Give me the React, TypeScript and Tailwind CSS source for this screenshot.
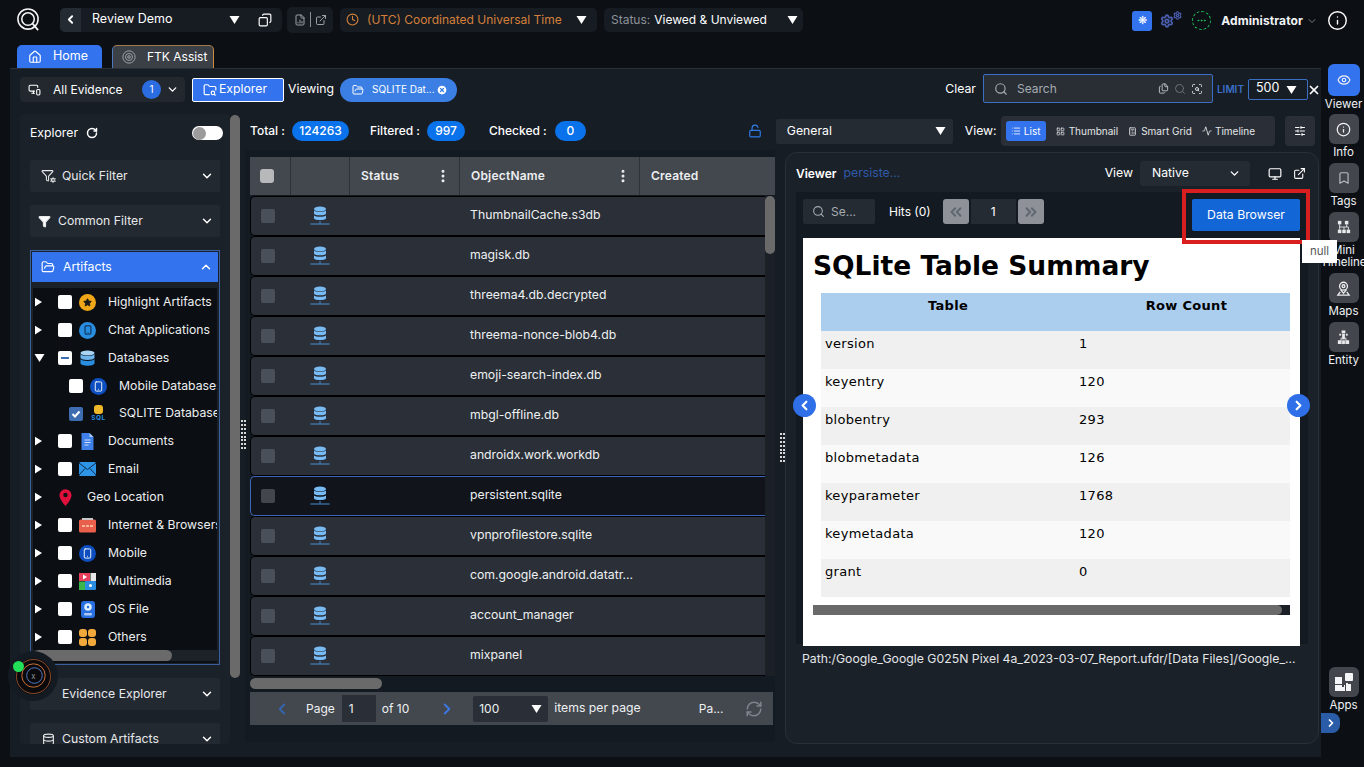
import React from 'react';
import { ChevronLeft, ChevronRight, ChevronDown, ChevronUp, Copy, Clock, Home, FolderSearch, FolderOpen, CircleX, Search, Eye, Info, Bookmark, Monitor, ExternalLink, LockOpen, List, LayoutGrid, Calculator, Activity, SlidersHorizontal, EllipsisVertical, RefreshCw, ChevronsLeft, ChevronsRight, Filter, RotateCw, X, Star, Smartphone, Database, FileChartColumn, Settings, Ellipsis, Files, ScanSearch, MonitorSmartphone } from 'lucide-react';

const Tri = ({ className = '' }: { className?: string }) => (
  <svg viewBox="0 0 10 8" className={`w-[11px] h-[8px] fill-white ${className}`}><path d="M0 0h10L5 8z" /></svg>
);

const DbIcon = () => (
  <svg viewBox="0 0 20 20" className="w-[20px] h-[20px]">
    <g fill="#78bcf6">
      <ellipse cx="10" cy="3" rx="6" ry="2.4" />
      <path d="M4 4.6c1.2 1.9 10.8 1.9 12 0v3.2c-1.2 2-10.8 2-12 0z" />
      <path d="M4 9.4c1.2 1.9 10.8 1.9 12 0v3.2c-1.2 2-10.8 2-12 0z" />
    </g>
    <path d="M10 15v2.5M0.5 18h19" stroke="#4a8fd0" strokeWidth="1" />
  </svg>
);

const TreeIcon = ({ k }: { k: string }) => {
  const cls = 'w-[17px] h-[17px] shrink-0';
  switch (k) {
    case 'star':
      return <span className={`${cls} rounded-full bg-[#f0a818] flex items-center justify-center`}><Star size={9} fill="#1a1a1a" stroke="#1a1a1a" /></span>;
    case 'chat':
      return <span className={`${cls} rounded-full bg-[#2a8ee0] flex items-center justify-center`}><Smartphone size={10} stroke="#0f3a66" strokeWidth={3} /></span>;
    case 'db':
      return (
        <svg viewBox="0 0 16 17" className={cls}>
          <ellipse cx="8" cy="3" rx="7" ry="2.6" fill="#a8d4f5" />
          <path d="M1 4c1 2.6 13 2.6 14 0v4c-1 2.6-13 2.6-14 0z" fill="#6cb4ec" />
          <path d="M1 9c1 2.6 13 2.6 14 0v4.5c-1 3-13 3-14 0z" fill="#2a8ee0" />
        </svg>
      );
    case 'mobile':
      return <span className={`${cls} rounded-full bg-[#0d4fc0] flex items-center justify-center`}><Smartphone size={11} stroke="#fff" strokeWidth={2} /></span>;
    case 'sql':
      return (
        <span className="w-[17px] h-[17px] shrink-0 flex flex-col items-center leading-none">
          <span className="w-[9px] h-[9px] bg-[#f0b92a] rounded-[3px]" />
          <span className="text-[6.5px] font-bold text-[#2a8ee0] tracking-[0.5px] mt-[1px]">SQL</span>
        </span>
      );
    case 'doc':
      return (
        <svg viewBox="0 0 16 17" className={cls}>
          <path d="M2 0h8l4 4v13H2z" fill="#3f7fe8" />
          <path d="M10 0l4 4h-4z" fill="#a9c8f5" />
          <path d="M5 7h6M5 9.5h6M5 12h4" stroke="#cfe0fa" strokeWidth="1" />
        </svg>
      );
    case 'mail':
      return (
        <svg viewBox="0 0 17 14" className="w-[17px] h-[14px] shrink-0">
          <rect width="17" height="14" rx="1.5" fill="#2e94e6" />
          <path d="M0 1l8.5 6.5L17 1M0 13l6-6.5M17 13l-6-6.5" stroke="#0b2c4d" strokeWidth="1" fill="none" />
        </svg>
      );
    case 'geo':
      return (
        <svg viewBox="0 0 14 18" className="w-[13px] h-[17px] shrink-0">
          <path d="M7 0a6.5 6.5 0 0 0-6.5 6.5C.5 11 7 18 7 18s6.5-7 6.5-11.5A6.5 6.5 0 0 0 7 0z" fill="#e0103c" />
          <circle cx="7" cy="6.2" r="2.4" fill="#111" />
        </svg>
      );
    case 'web':
      return (
        <svg viewBox="0 0 17 15" className="w-[17px] h-[15px] shrink-0">
          <rect y="1.5" width="17" height="13" rx="1.5" fill="#e8604c" />
          <rect x="3" width="11" height="2" fill="#c8c8c8" />
          <path d="M3 8h3M7 8h3M11 8h3" stroke="#f6d0b0" strokeWidth="1.5" />
        </svg>
      );
    case 'media':
      return (
        <svg viewBox="0 0 17 17" className={cls}>
          <rect width="11" height="8" fill="#e8405c" />
          <path d="M4 1.5l4 2.5-4 2.5z" fill="#fff" />
          <rect x="11.5" width="5.5" height="8" fill="#e8e8e8" />
          <rect y="8.5" width="8" height="8.5" fill="#39b54a" />
          <rect x="6" y="8" width="11" height="9" rx="1" fill="#2a8ee0" />
          <circle cx="11.5" cy="12.5" r="1.5" fill="#fff" />
        </svg>
      );
    case 'os':
      return (
        <svg viewBox="0 0 14 17" className="w-[14px] h-[17px] shrink-0">
          <rect width="14" height="17" rx="3" fill="#2a6fe0" />
          <circle cx="7" cy="6" r="3.8" fill="#d8ecfc" />
          <circle cx="7" cy="6" r="1.2" fill="#2a6fe0" />
          <rect x="3" y="12" width="8" height="2.5" rx="1" fill="#a9c8f5" />
        </svg>
      );
    default:
      return (
        <span className="w-[17px] h-[17px] shrink-0 grid grid-cols-2 gap-[1px]">
          <span className="bg-[#f2a93b] rounded-[3px]" /><span className="bg-[#f2a93b] rounded-[3px]" />
          <span className="bg-[#f2a93b] rounded-[3px]" /><span className="bg-[#f2a93b] rounded-[3px]" />
        </span>
      );
  }
};

const TreeRow = ({ label, icon, state = 'empty', open, child, noBox, short }: { label: string; icon: string; state?: string; open?: boolean; child?: boolean; noBox?: boolean; short?: boolean }) => (
  <div className={`${short ? 'h-[27px]' : 'h-[28px]'} flex items-center shrink-0 whitespace-nowrap ${child ? 'pl-[36px]' : 'pl-[1px]'}`}>
    {!child && (
      <span className="w-[24px] shrink-0">
        {open ? <Tri /> : <svg viewBox="0 0 8 10" className="w-[7px] h-[10px] fill-white ml-[1px]"><path d="M0 0l8 5-8 5z" /></svg>}
      </span>
    )}
    {noBox ? (
      <span className="w-[14px] shrink-0 flex justify-center"><TreeIcon k={icon} /></span>
    ) : (
      <>
        {state === 'checked' ? (
          <span className="w-[14px] h-[14px] shrink-0 rounded-[2px] bg-[#3d6cb0] flex items-center justify-center">
            <svg viewBox="0 0 10 10" className="w-[10px] h-[10px]"><path d="M1.5 5l2.5 2.5 4.5-5" stroke="#fff" strokeWidth="2" fill="none" /></svg>
          </span>
        ) : state === 'dash' ? (
          <span className="w-[14px] h-[14px] shrink-0 rounded-[2px] bg-white flex items-center justify-center"><span className="w-[8px] h-[2px] bg-[#3d6cb0]" /></span>
        ) : (
          <span className="w-[14px] h-[14px] shrink-0 rounded-[2px] bg-white" />
        )}
        <span className="w-[17px] flex justify-center ml-[7px] shrink-0"><TreeIcon k={icon} /></span>
      </>
    )}
    <span className={`text-[12.25px] text-[#eceef0] ${noBox ? 'ml-[15px]' : 'ml-[12px]'}`}>{label}</span>
  </div>
);

const Acc = ({ icon, label, pl = 'pl-[12px]' }: { icon: React.ReactNode; label: string; pl?: string }) => (
  <div className={`h-[32px] shrink-0 w-[190px] rounded-[2px] bg-[#232931] flex items-center ${pl} pr-[6px] text-[12.25px] text-[#e6e8ea]`}>
    {icon}
    <span className="ml-[7px] flex-1">{label}</span>
    <ChevronDown size={14} strokeWidth={2.5} className="text-white" />
  </div>
);

const rows = ['ThumbnailCache.s3db', 'magisk.db', 'threema4.db.decrypted', 'threema-nonce-blob4.db', 'emoji-search-index.db', 'mbgl-offline.db', 'androidx.work.workdb', 'persistent.sqlite', 'vpnprofilestore.sqlite', 'com.google.android.datatr...', 'account_manager', 'mixpanel'];
const tableRows: [string, string][] = [['version', '1'], ['keyentry', '120'], ['blobentry', '293'], ['blobmetadata', '126'], ['keyparameter', '1768'], ['keymetadata', '120'], ['grant', '0']];

const RailBtn = ({ icon, label, active, second }: { icon: React.ReactNode; label: string; active?: boolean; second?: string }) => (
  <div className={`flex flex-col items-center w-[43px] shrink-0 text-[11.5px] leading-[13px] text-[#f0f2f4] ${active ? '-mb-[1px]' : ''}`}>
    <div className={`rounded-[6px] flex items-center justify-center ${active ? 'bg-[#3373ee] w-[32px] h-[32px]' : 'bg-[#43474d] w-[30px] h-[30px]'}`}>{icon}</div>
    <span className="mt-[2px] whitespace-nowrap">{label}</span>
    {second && <span className="whitespace-nowrap -mt-[1px]">{second}</span>}
  </div>
);

const MiniIcon = () => (
  <svg viewBox="0 0 16 16" className="w-[14px] h-[14px]" fill="#e8eaec">
    <rect x="1" y="1" width="4" height="4" /><rect x="9" y="1" width="4" height="4" />
    <rect x="1" y="11" width="4" height="4" /><rect x="6" y="11" width="4" height="4" /><rect x="11" y="11" width="4" height="4" />
    <path d="M3 5v6M11 5v3H3M8 8v3M13 8v3M11 8h2" stroke="#e8eaec" fill="none" />
  </svg>
);
const MapIcon = () => (
  <svg viewBox="0 0 16 16" className="w-[15px] h-[15px]" fill="none" stroke="#eceef0" strokeWidth="1.4">
    <circle cx="8" cy="5.5" r="4.2" /><circle cx="8" cy="5.5" r="1.5" />
    <path d="M5 9.5L8 13l3-3.5M4.5 11.5L2 15h12l-2.5-3.5" />
  </svg>
);
const EntityIcon = () => (
  <svg viewBox="0 0 16 16" className="w-[15px] h-[15px]" fill="#e8eaec">
    <rect x="6" y="0.5" width="4" height="3" /><rect x="3.5" y="4" width="2" height="2" /><rect x="10.5" y="4" width="2" height="2" />
    <rect x="6.5" y="4" width="3" height="6" /><path d="M2 15v-4h3V8h1v7zM14 15v-4h-3V8h-1v7z" /><rect x="6.5" y="11" width="3" height="4" />
  </svg>
);
const AppsIcon = () => (
  <svg viewBox="0 0 20 20" className="w-[20px] h-[20px]" fill="#f4f5f6">
    <rect x="1" y="5" width="7" height="7" /><rect x="11" y="1" width="8" height="8" rx="1" />
    <path d="M1 13h7v2h2v-2h1v6H1zM12 11h2v1h3v7h-5z" />
  </svg>
);
const QuickIcon = () => (
  <span className="relative w-[14px] h-[14px] flex">
    <Filter size={13} />
    <Settings size={8} fill="#fff" stroke="#232931" className="absolute right-[-2px] bottom-[-1px]" />
  </span>
);

export default function App() {
  return (
    <div className="w-[1364px] h-[767px] overflow-hidden bg-[#0c1015] flex flex-col relative font-[Inter,'Noto_Sans',sans-serif] text-white">
      {/* top bar */}
      <div className="h-[45px] shrink-0 flex items-center text-[12.5px]">
        <svg viewBox="0 0 26 26" className="w-[25px] h-[25px] ml-[16px] mb-[6px]">
          <circle cx="12.5" cy="12.5" r="10.5" stroke="#f2f4f6" strokeWidth="1.6" fill="none" />
          <circle cx="12.5" cy="12.5" r="6.5" stroke="#f2f4f6" strokeWidth="1.6" fill="none" />
          <path d="M17 17l6 7" stroke="#f2f4f6" strokeWidth="1.8" />
        </svg>
        <div className="ml-[19px] mb-[6px] w-[222px] h-[24px] rounded-[5px] bg-[#171c23] flex items-center overflow-hidden">
          <span className="w-[21px] h-full bg-[#252b33] flex items-center justify-center"><ChevronLeft size={13} strokeWidth={3.5} /></span>
          <span className="ml-[11px] flex-1">Review Demo</span>
          <Tri className="mr-[18px]" />
          <Copy size={14} className="mr-[10px] scale-x-[-1]" />
        </div>
        <div className="ml-[5px] mb-[6px] w-[46px] h-[26px] rounded-[5px] bg-[#171c23] flex items-center justify-center gap-[4px] text-[#9ca1a7]">
          <FileChartColumn size={12} />
          <span className="w-px h-[15px] bg-[#8a8f95]" />
          <ExternalLink size={12} />
        </div>
        <div className="ml-[7px] mb-[6px] w-[257px] h-[24px] rounded-[5px] bg-[#171c23] flex items-center pl-[6px] text-[12px] text-[#d5803a]">
          <Clock size={13} strokeWidth={2} />
          <span className="ml-[8px] flex-1 whitespace-nowrap">(UTC) Coordinated Universal Time</span>
          <Tri className="mr-[10px]" />
        </div>
        <div className="ml-[7px] mb-[6px] w-[199px] h-[24px] rounded-[5px] bg-[#171c23] flex items-center pl-[7px] text-[12px]">
          <span className="text-[#8d9298]">Status:</span>
          <span className="ml-[4px] flex-1 whitespace-nowrap">Viewed & Unviewed</span>
          <Tri className="mr-[5px]" />
        </div>
        <div className="ml-auto flex items-center mb-[4px]">
          <span className="w-[20px] h-[20px] rounded-[3px] bg-[#3373ee] flex items-center justify-center text-[11px]">❋</span>
          <Settings size={14} strokeWidth={3} className="ml-[8px] text-[#4c5fb0]" />
          <Settings size={9} strokeWidth={3} className="-mt-[10px] -ml-[1px] text-[#4c5fb0]" />
          <span className="ml-[10px] w-[19px] h-[19px] rounded-full border border-dashed border-[#22c55e] flex items-center justify-center"><Ellipsis size={11} className="text-[#22c55e]" /></span>
          <span className="ml-[10px] text-[12px] font-bold text-[#f2f4f6] tracking-[0.1px]">Administrator</span>
          <ChevronDown size={12} className="ml-[3px] text-[#777c82]" />
          <Info size={21} strokeWidth={1.6} className="ml-[9px] mr-[16px] text-white" />
        </div>
      </div>

      <div className="flex-1 flex min-h-0">
        <div className="w-[1321px] shrink-0 flex flex-col">
          {/* tabs */}
          <div className="h-[23px] shrink-0 flex pl-[17px] gap-[10px] text-[12.5px]">
            <div className="w-[85px] rounded-t-[5px] bg-[#3373ee] flex items-center pl-[11px]">
              <Home size={14} />
              <span className="ml-[11px]">Home</span>
            </div>
            <div className="w-[102px] rounded-t-[5px] bg-[#3b4047] border border-b-0 border-l-[#4f78bd] border-t-[#a07c4a] border-r-[#d08a3c] flex items-center pl-[9px] text-[12px]">
              <svg viewBox="0 0 16 16" className="w-[14px] h-[14px]" fill="none" stroke="#a9adb2"><circle cx="8" cy="8" r="7" /><circle cx="8" cy="8" r="4" /><circle cx="8" cy="8" r="1.5" /></svg>
              <span className="ml-[11px]">FTK Assist</span>
            </div>
          </div>

          {/* main panel */}
          <div className="ml-[10px] w-[1311px] h-[689px] bg-[#171d25] border-t border-[#2b3037] flex flex-col">
            {/* filter bar */}
            <div className="h-[39px] shrink-0 flex items-center pl-[10px] pt-[2px] text-[12.25px]">
              <div className="w-[165px] h-[25px] rounded-[4px] bg-[#23282f] flex items-center pl-[8px] text-[12px]">
                <MonitorSmartphone size={13} />
                <span className="ml-[12px] flex-1">All Evidence</span>
                <span className="w-[19px] h-[19px] rounded-full bg-[#2b6ce0] flex items-center justify-center text-[10px]">1</span>
                <ChevronDown size={13} strokeWidth={2.5} className="ml-[5px] mr-[6px]" />
              </div>
              <div className="ml-[7px] w-[92px] h-[24px] rounded-[2px] bg-[#3373ee] border border-white flex items-center pl-[10px]">
                <FolderSearch size={14} />
                <span className="ml-[2px]">Explorer</span>
              </div>
              <span className="ml-[4px]">Viewing</span>
              <div className="ml-[6px] w-[117px] h-[24px] rounded-full bg-[#3b7fe4] flex items-center pl-[12px] text-[10px]">
                <FolderOpen size={12} />
                <span className="ml-[8px] flex-1">SQLITE Dat...</span>
                <CircleX size={12} fill="#fff" stroke="#3b7fe4" strokeWidth={2.5} className="mr-[9px]" />
              </div>
              <span className="ml-auto">Clear</span>
              <div className="ml-[7px] w-[230px] h-[29px] -mt-[2px] rounded-[2px] bg-[#292e35] border border-[#3a6fc4] flex items-center pl-[10px]">
                <Search size={14} className="text-[#a6abb1]" />
                <span className="ml-[9px] flex-1 text-[#a6abb1] text-[12px]">Search</span>
                <Files size={11} className="text-[#c3c7cb]" />
                <Search size={12} className="ml-[5px] text-[#6c7177]" />
                <ScanSearch size={12} className="ml-[5px] mr-[9px] text-[#d5d8db]" />
              </div>
              <span className="ml-[4px] text-[10px] font-semibold text-[#3b70c9]">LIMIT</span>
              <div className="ml-[4px] w-[60px] h-[21px] rounded-[2px] border border-[#3a6fc4] flex items-center pl-[7px] text-[12.5px]">
                <span className="flex-1 -mt-[2px]">500</span>
                <Tri className="w-[6px] h-[4px] fill-[#3b82f6] mr-[10px]" />
              </div>
              <X size={14} strokeWidth={3} className="ml-[-1px]" />
            </div>

            {/* content */}
            <div className="flex-1 flex pl-[10px] min-h-0">
              <div className="w-[210px] h-[630px] mt-[6px] bg-[#1b2129] rounded-[4px] flex flex-col pl-[10px] overflow-hidden text-[12.25px] shrink-0">
                <div className="h-[46px] pb-[8px] shrink-0 flex items-center">
                  <span>Explorer</span>
                  <RotateCw size={12} strokeWidth={3} className="ml-[8px]" />
                  <span className="ml-auto mr-[7px] w-[31px] h-[14px] rounded-full bg-white flex items-center pl-[1px]"><span className="w-[13px] h-[13px] rounded-full bg-[#9c9c9c]" /></span>
                </div>
                <Acc icon={<QuickIcon />} label="Quick Filter" pl="pl-[11px]" />
                <div className="h-[13px] shrink-0" />
                <Acc icon={<Filter size={13} fill="#fff" />} label="Common Filter" pl="pl-[8px]" />
                <div className="h-[13px] shrink-0" />
                <div className="w-[190px] h-[415px] shrink-0 border border-[#3a5f9c] p-[1px] flex flex-col">
                  <div className="h-[30px] shrink-0 bg-[#3373ee] flex items-center pl-[9px] pr-[5px]">
                    <FolderOpen size={14} />
                    <span className="ml-[8px] flex-1">Artifacts</span>
                    <ChevronUp size={14} strokeWidth={2.5} />
                  </div>
                  <div className="mt-[6px] mx-[1px] flex-1 bg-[#0b0e13] flex flex-col overflow-hidden">
                    <TreeRow label="Highlight Artifacts" icon="star" />
                    <TreeRow label="Chat Applications" icon="chat" />
                    <TreeRow label="Databases" icon="db" open state="dash" />
                    <TreeRow label="Mobile Databases" icon="mobile" child />
                    <TreeRow label="SQLITE Database" icon="sql" child state="checked" short />
                    <TreeRow label="Documents" icon="doc" />
                    <TreeRow label="Email" icon="mail" />
                    <TreeRow label="Geo Location" icon="geo" noBox />
                    <TreeRow label="Internet & Browsers" icon="web" />
                    <TreeRow label="Mobile" icon="mobile" />
                    <TreeRow label="Multimedia" icon="media" />
                    <TreeRow label="OS File" icon="os" />
                    <TreeRow label="Others" icon="others" />
                    <div className="h-[11px] mt-[-1px] shrink-0 bg-[#1d2229]"><div className="w-[139px] h-full rounded-full bg-[#6a6a6a]" /></div>
                  </div>
                </div>
                <div className="h-[13px] shrink-0" />
                <Acc icon={<span className="w-[14px]" />} label="Evidence Explorer" pl="pl-[11px]" />
                <div className="h-[13px] shrink-0" />
                <Acc icon={<Database size={13} />} label="Custom Artifacts" pl="pl-[12px]" />
              </div>
              <div className="w-[10px] h-[563px] mt-[7px] shrink-0 rounded-full bg-[#6a6a6a]" />
              <div className="w-[5px] shrink-0" />

              {/* right area */}
              <div className="w-[1075px] flex flex-col shrink-0">
                <div className="h-[44px] pt-[2px] shrink-0 flex items-center text-[12px] font-medium pl-[5px]">
                  <span>Total :</span>
                  <span className="ml-[7px] w-[57px] h-[20px] rounded-full bg-[#0a72ea] flex items-center justify-center">124263</span>
                  <span className="ml-[21px]">Filtered :</span>
                  <span className="ml-[7px] w-[38px] h-[20px] rounded-full bg-[#0a72ea] flex items-center justify-center">997</span>
                  <span className="ml-[24px]">Checked :</span>
                  <span className="ml-[8px] w-[31px] h-[20px] rounded-full bg-[#0a72ea] flex items-center justify-center">0</span>
                  <LockOpen size={14} className="ml-[162px] text-[#2f7be8]" />
                  <div className="ml-[14px] w-[177px] h-[25px] rounded-[2px] bg-[#252b33] flex items-center pl-[11px] font-normal text-[12.25px]">
                    <span className="flex-1">General</span>
                    <Tri className="mr-[7px]" />
                  </div>
                  <span className="ml-[12px] font-normal text-[12.25px]">View:</span>
                  <div className="ml-[4px] w-[274px] h-[30px] rounded-[4px] bg-[#2a2f37] flex items-center pl-[5px] text-[10px] font-normal text-[#e4e6e8]">
                    <span className="w-[40px] h-[20px] rounded-[3px] bg-[#3373ee] text-white flex items-center justify-center gap-[3px]"><List size={10} />List</span>
                    <span className="ml-[10px] flex items-center gap-[4px]"><LayoutGrid size={9} />Thumbnail</span>
                    <span className="ml-[10px] flex items-center gap-[4px]"><Calculator size={9} />Smart Grid</span>
                    <span className="ml-[10px] flex items-center gap-[3px]"><Activity size={10} />Timeline</span>
                  </div>
                  <div className="ml-[10px] w-[30px] h-[30px] rounded-[4px] bg-[#2a2f37] flex items-center justify-center"><SlidersHorizontal size={12} /></div>
                </div>

                <div className="flex-1 flex min-h-0">
                  {/* grid panel */}
                  <div className="w-[530px] h-[592px] -mt-[2px] shrink-0 bg-[#141a21] pt-[7px] pl-[5px] flex flex-col">
                    <div className="h-[38px] shrink-0 w-[525px] bg-[#43484e] flex items-stretch text-[12px] font-semibold tracking-[0.2px] text-[#eceef0]">
                      <div className="w-[41px] border-r border-[#2e3238] flex items-center pl-[10px]"><span className="w-[14px] h-[14px] rounded-[3px] bg-[#b6b8ba]" /></div>
                      <div className="w-[59px] border-r border-[#2e3238]" />
                      <div className="w-[110px] border-r border-[#2e3238] flex items-center pl-[11px]"><span className="flex-1">Status</span><EllipsisVertical size={16} strokeWidth={2.5} className="mr-[8px]" /></div>
                      <div className="w-[180px] border-r border-[#2e3238] flex items-center pl-[11px]"><span className="flex-1">ObjectName</span><EllipsisVertical size={16} strokeWidth={2.5} className="mr-[8px]" /></div>
                      <div className="flex items-center pl-[11px]">Created</div>
                    </div>
                    <div className="flex w-[525px] h-[480px] shrink-0 mt-[1px]">
                      <div className="w-[515px] flex flex-col">
                        {rows.map((r, i) => (
                          <div key={r} className={`h-[40px] shrink-0 rounded-l-[5px] border border-r-0 flex items-center ${i === 7 ? 'bg-[#11151b] border-[#3d66b8] border-r' : 'bg-[#2b3038] border-black'}`}>
                            <span className={`ml-[10px] w-[14px] h-[14px] rounded-[2px] ${i === 7 ? 'bg-[#43474d]' : 'bg-[#4a5059]'}`} />
                            <span className="ml-[35px]"><DbIcon /></span>
                            <span className="ml-[140px] -mt-[1px] text-[12.25px] text-[#eef0f2] whitespace-nowrap">{r}</span>
                          </div>
                        ))}
                      </div>
                      <div className="w-[10px] bg-[#1b2027]"><div className="h-[58px] rounded-full bg-[#6a6a6a]" /></div>
                    </div>
                    <div className="h-[11px] shrink-0 w-[525px] mt-[2px]"><div className="w-[132px] h-full rounded-full bg-[#6a6a6a]" /></div>
                    <div className="h-[33px] shrink-0 w-[523px] mt-[3px] bg-[#43484e] flex items-center text-[12px] text-[#eef0f2]">
                      <ChevronLeft size={18} strokeWidth={2.5} className="ml-[23px] text-[#3565b0]" />
                      <span className="ml-[15px]">Page</span>
                      <span className="ml-[7px] w-[34px] h-[27px] bg-[#2a2f37] flex items-center pl-[7px]">1</span>
                      <span className="ml-[6px]">of 10</span>
                      <ChevronRight size={18} strokeWidth={2.5} className="ml-[29px] text-[#3b78e0]" />
                      <div className="ml-[17px] w-[75px] h-[26px] rounded-[2px] bg-[#2a2f37] flex items-center pl-[6px]">
                        <span className="flex-1">100</span>
                        <Tri className="mr-[6px]" />
                      </div>
                      <span className="ml-[6px] text-[12.25px]">items per page</span>
                      <span className="ml-[58px]">Pa...</span>
                      <RefreshCw size={18} className="ml-[21px] text-[#7e848b]" />
                    </div>
                  </div>
                  <div className="w-[10px] shrink-0" />

                  {/* viewer */}
                  <div className="w-[534px] h-[592px] shrink-0 rounded-[12px] bg-[#1b2129] border border-[#2a3039] flex flex-col relative">
                    <div className="h-[39px] pt-[2px] shrink-0 flex items-center pl-[10px] text-[12.25px]">
                      <span className="font-semibold text-[12px]">Viewer</span>
                      <span className="ml-[7px] text-[#2f5aa8]">persiste...</span>
                      <span className="ml-auto">View</span>
                      <div className="ml-[7px] w-[110px] h-[25px] rounded-[3px] bg-[#252b33] flex items-center pl-[12px]">
                        <span className="flex-1">Native</span>
                        <ChevronDown size={13} strokeWidth={2.5} className="mr-[9px]" />
                      </div>
                      <Monitor size={14} className="ml-[18px]" />
                      <ExternalLink size={13} className="ml-[11px] mr-[12px]" />
                    </div>
                    <div className="ml-[10px] w-[512px] h-[452px] shrink-0 bg-[#141a21] flex flex-col pl-[7px]">
                      <div className="h-[46px] shrink-0 flex items-start pt-[7px] text-[12px]">
                        <div className="w-[72px] h-[25px] rounded-[2px] bg-[#252b33] flex items-center pl-[9px] text-[#a6abb1]"><Search size={13} /><span className="ml-[6px]">Se...</span></div>
                        <span className="ml-[14px] h-[25px] flex items-center">Hits (0)</span>
                        <span className="ml-[12px] w-[26px] h-[25px] rounded-[3px] bg-[#8e9298] flex items-center justify-center text-[#5f6670]"><ChevronsLeft size={18} strokeWidth={2.5} /></span>
                        <span className="ml-[2px] w-[45px] h-[25px] bg-[#252b33] flex items-center justify-center">1</span>
                        <span className="ml-[2px] w-[26px] h-[25px] rounded-[3px] bg-[#8e9298] flex items-center justify-center text-[#5f6670]"><ChevronsRight size={18} strokeWidth={2.5} /></span>
                        <button className="ml-auto mr-[8px] w-[108px] h-[32px] rounded-[2px] bg-[#1366d6] text-[12.25px] text-white">Data Browser</button>
                      </div>
                      <div className="w-[497px] h-[408px] shrink-0 bg-white pl-[10px] pt-[10px] font-['DejaVu_Sans',sans-serif] text-black flex flex-col">
                        <h1 className="text-[26.5px] font-bold leading-[36px] h-[45px]">SQLite Table Summary</h1>
                        <div className="ml-[8px] w-[469px] text-[13px] tracking-[0.3px]">
                          <div className="h-[38px] bg-[#abcdee] flex font-bold">
                            <span className="w-[254px] text-center pt-[3px]">Table</span>
                            <span className="flex-1 text-center pt-[3px] pl-[8px]">Row Count</span>
                          </div>
                          {tableRows.map(([a, b], i) => (
                            <div key={a} className={`h-[38px] flex pl-[4px] pt-[3px] ${i % 2 === 0 ? 'bg-[#f0f0f0]' : 'bg-[#f9f9f9]'}`}>
                              <span className="w-[254px]">{a}</span>
                              <span>{b}</span>
                            </div>
                          ))}
                        </div>
                        <div className="w-[477px] h-[10px] mt-[8px] bg-[#1b2027]"><div className="w-[469px] h-full rounded-r-full bg-[#6a6a6a]" /></div>
                      </div>
                    </div>
                    <div className="ml-[16px] mt-[6px] text-[12.25px] text-[#e4e6e8] whitespace-nowrap">Path:/Google_Google G025N Pixel 4a_2023-03-07_Report.ufdr/[Data Files]/Google_...</div>

                    {/* overlays */}
                    <div className="absolute left-[396px] top-[36px] w-[128px] h-[55px] border-[4px] border-[#d81e1e] pointer-events-none" />
                    <span className="absolute left-[7px] top-[241px] w-[23px] h-[23px] rounded-full bg-[#2f6fe8] flex items-center justify-center"><ChevronLeft size={15} strokeWidth={3.5} /></span>
                    <span className="absolute left-[501px] top-[241px] w-[23px] h-[23px] rounded-full bg-[#2f6fe8] flex items-center justify-center"><ChevronRight size={15} strokeWidth={3.5} /></span>
                  </div>
                </div>
              </div>
            </div>
          </div>
        </div>

        {/* right rail */}
        <div className="w-[43px] shrink-0 flex flex-col pt-[19px]">
          <div className="flex flex-col gap-[4px] translate-x-[1px]">
            <RailBtn active icon={<Eye size={14} />} label="Viewer" />
            <RailBtn icon={<Info size={15} />} label="Info" />
            <RailBtn icon={<Bookmark size={14} className="text-[#b9bcc0]" />} label="Tags" />
            <RailBtn icon={<MiniIcon />} label="Mini" second="Timeline" />
            <RailBtn icon={<MapIcon />} label="Maps" />
            <RailBtn icon={<EntityIcon />} label="Entity" />
          </div>
          <div className="mt-[300px] translate-x-[1px]"><RailBtn icon={<AppsIcon />} label="Apps" /></div>
          <span className="w-[19px] h-[20px] rounded-r-[8px] bg-[#2a5ca8] flex items-center justify-center mt-[1px]"><ChevronRight size={12} strokeWidth={3.5} /></span>
        </div>
      </div>

      {/* floating overlays */}
      <span className="absolute left-[1302px] top-[240px] w-[35px] h-[23px] bg-white text-[#555] text-[11.5px] flex items-center justify-center">null</span>
      <div className="absolute left-[8px] top-[651px] w-[50px] h-[50px] rounded-full bg-[#141a21] flex items-center justify-center">
        <svg viewBox="0 0 38 38" className="w-[37px] h-[37px]">
          <circle cx="19" cy="19" r="18.5" fill="#0a0a0c" />
          <circle cx="19" cy="19" r="17.5" fill="none" stroke="#c96a3a" strokeWidth="0.7" />
          <circle cx="19" cy="18" r="12" fill="none" stroke="#d0703a" strokeWidth="1" />
          <circle cx="20" cy="18" r="8" fill="none" stroke="#5478c8" strokeWidth="1" />
          <text x="19" y="21.5" textAnchor="middle" fontSize="8" fill="#8a8f95">x</text>
        </svg>
      </div>
      <span className="absolute left-[13px] top-[661px] w-[11px] h-[11px] rounded-full bg-[#22e05a]" />
      <div className="absolute left-[241px] top-[420px] w-[5px] h-[30px] grid grid-cols-2 gap-[1px]">
        {Array.from({ length: 16 }).map((_, i) => <span key={i} className="w-[2px] h-[2px] bg-[#d8d8d8]" />)}
      </div>
      <div className="absolute left-[780px] top-[433px] w-[5px] h-[30px] grid grid-cols-2 gap-[1px]">
        {Array.from({ length: 16 }).map((_, i) => <span key={i} className="w-[2px] h-[2px] bg-[#d8d8d8]" />)}
      </div>
    </div>
  );
}
